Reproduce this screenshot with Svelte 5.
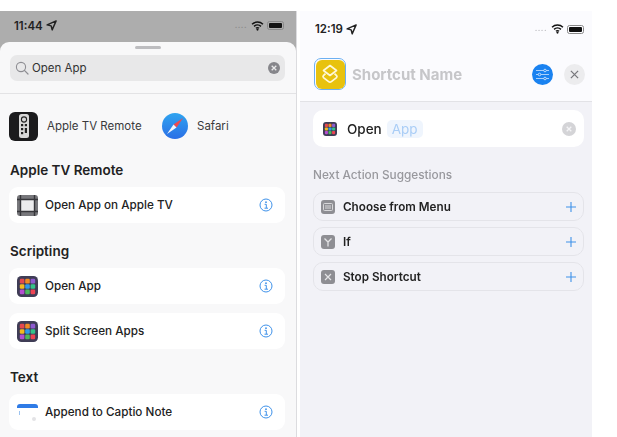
<script>
  const appColors = ['#e5484d', '#f08a24', '#8e5bd0', '#f5b921', '#2f9be8', '#34c48a', '#b44fd0', '#4cb85c', '#ee4453'];

  const sections = [
    { title: 'Apple TV Remote', actions: [{ name: 'Open App on Apple TV', icon: 'film' }] },
    {
      title: 'Scripting',
      actions: [
        { name: 'Open App', icon: 'apps' },
        { name: 'Split Screen Apps', icon: 'apps' }
      ]
    },
    { title: 'Text', actions: [{ name: 'Append to Captio Note', icon: 'note' }] }
  ];

  const suggestions = [
    { name: 'Choose from Menu', icon: 'menu' },
    { name: 'If', icon: 'if' },
    { name: 'Stop Shortcut', icon: 'stop' }
  ];
</script>

{#snippet statusIcons()}
  <div class="status-icons">
    <span class="dots">....</span>
    <svg width="13" height="10" viewBox="0 0 14 11">
      <path d="M1 3.6a8.6 8.6 0 0 1 12 0M3.2 5.9a5.4 5.4 0 0 1 7.6 0M5.3 8a2.4 2.4 0 0 1 3.4 0" fill="none" stroke="#111" stroke-width="1.6" />
      <circle cx="7" cy="9.4" r="1.2" fill="#111" />
    </svg>
    <span class="battery"><span class="level"></span></span>
  </div>
{/snippet}

{#snippet appGrid(size)}
  <svg class="grid-icon" width={size} height={size} viewBox="0 0 21 21">
    <rect width="21" height="21" rx="4.5" fill="#3f3d56" />
    {#each appColors as color, i}
      <rect x={2.8 + (i % 3) * 5.4} y={2.8 + Math.floor(i / 3) * 5.4} width="4.6" height="4.6" rx="1.2" fill={color} />
    {/each}
  </svg>
{/snippet}

{#snippet arrow(color)}
  <svg width="11" height="11" viewBox="0 0 10 10">
    <path d="M9.2 0.8 5.6 9 4.7 5.3 1 4.4Z" fill="none" stroke={color} stroke-width="1.3" stroke-linejoin="round" />
  </svg>
{/snippet}

<div class="screen">
  <section class="phone left">
    <header class="status dim">
      <div class="time">11:44 {@render arrow('#222')}</div>
      {@render statusIcons()}
    </header>

    <div class="sheet">
      <div class="grabber"></div>
      <div class="search-wrap">
        <div class="search">
          <svg width="14" height="14" viewBox="0 0 14 14">
            <circle cx="6" cy="6" r="4.6" fill="none" stroke="#8e8e93" stroke-width="1.1" />
            <path d="M9.4 9.4 13 13" stroke="#8e8e93" stroke-width="1.2" stroke-linecap="round" />
          </svg>
          <span class="query">Open App</span>
          <span class="clear">
            <svg width="6" height="6" viewBox="0 0 6 6"><path d="M.7.7l4.6 4.6M5.3.7.7 5.3" stroke="#e9e9ea" stroke-width="1.3" /></svg>
          </span>
        </div>
      </div>

      <div class="apps">
        <div class="app">
          <span class="remote">
            <svg width="10" height="24" viewBox="0 0 10 24">
              <rect width="10" height="24" rx="2.5" fill="#d8d8d8" />
              <circle cx="5" cy="5.5" r="2.6" fill="none" stroke="#222" stroke-width="1.1" />
              <rect x="2" y="10" width="2.2" height="2.2" fill="#222" />
              <rect x="5.8" y="10" width="2.2" height="2.2" fill="#222" />
              <rect x="2" y="14" width="2.2" height="2.2" fill="#222" />
              <rect x="5.8" y="14" width="2.2" height="5" fill="#222" />
              <rect x="2" y="18" width="2.2" height="2.2" fill="#222" />
            </svg>
          </span>
          <span>Apple TV Remote</span>
        </div>
        <div class="app">
          <svg width="26" height="26" viewBox="0 0 26 26">
            <defs>
              <linearGradient id="sky" x1="0" y1="0" x2="0" y2="1">
                <stop offset="0" stop-color="#2fa4f0" />
                <stop offset="1" stop-color="#2b6fe6" />
              </linearGradient>
            </defs>
            <circle cx="13" cy="13" r="13" fill="url(#sky)" />
            <path d="M21 5 11.5 11.5 14.5 14.5Z" fill="#ee4a4f" />
            <path d="M5 21 11.5 11.5 14.5 14.5Z" fill="#f4f6fb" />
          </svg>
          <span>Safari</span>
        </div>
      </div>

      {#each sections as section}
        <h2>{section.title}</h2>
        <div class="cards">
          {#each section.actions as action}
            <div class="card">
              {#if action.icon === 'film'}
                <svg width="21" height="21" viewBox="0 0 21 21">
                  <rect width="21" height="21" rx="3" fill="#77777b" />
                  <rect x="4" y="5" width="13" height="11" fill="#ededee" />
                  <path d="M3.5 0v21M17.5 0v21M0 4.5h21M0 16.5h21" stroke="#37373b" stroke-width="1.4" />
                </svg>
              {:else if action.icon === 'apps'}
                {@render appGrid(21)}
              {:else}
                <svg width="21" height="21" viewBox="0 0 21 21">
                  <path d="M0 5a3 3 0 0 1 3-3h15a3 3 0 0 1 3 3v1H0Z" fill="#2f7be6" />
                  <rect x="2" y="9" width="1" height="4" fill="#9cc3f0" />
                  <circle cx="17" cy="17" r="2" fill="#e3e3e6" />
                </svg>
              {/if}
              <span class="name">{action.name}</span>
              <svg class="info" width="14" height="14" viewBox="0 0 14 14">
                <circle cx="7" cy="7" r="6" fill="none" stroke="#3f92ea" stroke-width="1" />
                <circle cx="7" cy="4.2" r=".9" fill="#3f92ea" />
                <path d="M5.6 6.3H7.3V10M5.5 10.2H9" fill="none" stroke="#3f92ea" stroke-width="1" />
              </svg>
            </div>
          {/each}
        </div>
      {/each}
    </div>
  </section>

  <section class="phone right">
    <div class="top">
      <header class="status">
        <div class="time">12:19 {@render arrow('#222')}</div>
        {@render statusIcons()}
      </header>
      <div class="title-row">
        <span class="shortcut-ring">
          <span class="shortcut-icon">
            <svg width="20" height="22" viewBox="0 0 20 22">
              <path d="M10 2.5 16.5 7.5 10 12.5 3.5 7.5Z" fill="none" stroke="#fff8d8" stroke-width="1.7" stroke-linejoin="round" />
              <path d="M5.5 10.6 3.4 12.6C2.8 13.3 2.9 14 3.5 14.6L8.6 18.6a2.3 2.3 0 0 0 2.8 0l5.1-4c.6-.6.7-1.3.1-2L14.5 10.6" fill="none" stroke="#fff8d8" stroke-width="1.7" />
            </svg>
          </span>
        </span>
        <span class="shortcut-name">Shortcut Name</span>
        <span class="settings">
          <svg width="15" height="13" viewBox="0 0 15 13">
            <path d="M1 2.5h13M1 6.5h13M1 10.5h13" stroke="#a9d0fb" stroke-width="1" />
            <circle cx="10" cy="2.5" r="1.3" fill="#1a82f0" stroke="#d7e9fe" stroke-width=".8" />
            <circle cx="4.5" cy="6.5" r="1.3" fill="#1a82f0" stroke="#d7e9fe" stroke-width=".8" />
            <circle cx="10" cy="10.5" r="1.3" fill="#1a82f0" stroke="#d7e9fe" stroke-width=".8" />
          </svg>
        </span>
        <span class="close">
          <svg width="9" height="9" viewBox="0 0 10 10"><path d="M1 1l8 8M9 1l-8 8" stroke="#77777c" stroke-width="1.4" /></svg>
        </span>
      </div>
    </div>

    <div class="body">
      <div class="action">
        {@render appGrid(14)}
        <span class="verb">Open</span>
        <span class="token">App</span>
        <span class="action-clear">
          <svg width="6" height="6" viewBox="0 0 6 6"><path d="M.7.7l4.6 4.6M5.3.7.7 5.3" stroke="#f4f4f6" stroke-width="1.3" /></svg>
        </span>
      </div>

      <h3>Next Action Suggestions</h3>

      <div class="pills">
        {#each suggestions as item}
          <div class="pill">
            <span class="pill-icon">
              <svg width="10" height="10" viewBox="0 0 10 10">
                {#if item.icon === 'menu'}
                  <rect x=".5" y="1.5" width="9" height="7" rx="1" fill="none" stroke="#d8d8da" />
                  <path d="M2 4h6M2 6h6" stroke="#d8d8da" />
                {:else if item.icon === 'if'}
                  <path d="M1.5 1.5 5 5l3.5-3.5M5 5v4.5" fill="none" stroke="#e4e4e6" stroke-width="1.3" />
                {:else}
                  <path d="M2 2l6 6M8 2l-6 6" stroke="#e4e4e6" stroke-width="1.2" />
                {/if}
              </svg>
            </span>
            <span class="pill-name">{item.name}</span>
            <svg class="plus" width="10" height="10" viewBox="0 0 10 10"><path d="M5 0v10M0 5h10" stroke="#3f92ea" stroke-width="1.1" /></svg>
          </div>
        {/each}
      </div>
    </div>
  </section>
</div>

<style>
  :global(body) {
    background: #fff;
    overflow: hidden;
  }
  .screen {
    display: flex;
    gap: 3px;
    width: 617px;
    height: 437px;
    padding-top: 11px;
    box-sizing: border-box;
    overflow: hidden;
    font-family: Inter, "Liberation Sans", sans-serif;
    color: #1c1c1e;
    filter: blur(0.5px);
  }
  .phone {
    display: flex;
    flex-direction: column;
    overflow: hidden;
  }
  .left {
    width: 297px;
    background: #adadad;
    border-right: 1px solid #dcdcdf;
    box-sizing: border-box;
  }
  .right {
    width: 292px;
    background: #f2f2f7;
  }
  .status {
    display: flex;
    justify-content: space-between;
    align-items: center;
    height: 31px;
    padding: 0 12px 2px 14px;
    box-sizing: border-box;
    flex: none;
  }
  .status.dim .dots {
    color: #8c8c8c;
  }
  .time {
    display: flex;
    align-items: center;
    gap: 3px;
    font-size: 11.5px;
    font-weight: 600;
    color: #222;
  }
  .status-icons {
    display: flex;
    align-items: center;
    gap: 3px;
  }
  .dots {
    font-size: 9px;
    letter-spacing: 0.5px;
    line-height: 9px;
    color: #b8b8bc;
    margin-right: 1px;
    padding-bottom: 3px;
  }
  .battery {
    display: block;
    width: 17px;
    height: 9px;
    padding: 1px;
    box-sizing: border-box;
    border: 1px solid #888;
    border-radius: 2.5px;
  }
  .level {
    display: block;
    height: 100%;
    background: #111;
    border-radius: 1px;
  }

  .sheet {
    flex: 1;
    background: #f8f8f9;
    border-radius: 9px 9px 0 0;
  }
  .grabber {
    width: 26px;
    height: 3px;
    margin: 4px auto 0;
    border-radius: 2px;
    background: #bdbdc0;
  }
  .search-wrap {
    padding: 6px 11px 12px 10px;
    border-bottom: 1px solid #e3e3e5;
  }
  .search {
    display: flex;
    align-items: center;
    height: 26px;
    padding: 0 5px 0 5px;
    background: #e8e8e9;
    border-radius: 7px;
  }
  .query {
    flex: 1;
    margin-left: 3px;
    font-size: 11.5px;
    color: #333;
  }
  .clear {
    display: grid;
    place-items: center;
    width: 12px;
    height: 12px;
    border-radius: 50%;
    background: #86868b;
  }
  .apps {
    display: flex;
    align-items: center;
    height: 30px;
    margin-top: 17px;
    padding-left: 9px;
  }
  .app {
    display: flex;
    align-items: center;
    gap: 9px;
    font-size: 11.5px;
    color: #3a3a3c;
  }
  .app:first-child {
    width: 153px;
  }
  .remote {
    display: grid;
    place-items: center;
    width: 29px;
    height: 29px;
    background: #1b1b1d;
    border-radius: 6px;
  }
  h2 {
    margin: 21px 0 8px 10px;
    font-size: 13.5px;
    line-height: 17px;
    font-weight: 600;
    color: #222;
  }
  .cards {
    display: flex;
    flex-direction: column;
    gap: 9px;
    margin: 0 11px 0 9px;
  }
  .cards + h2 {
    margin-top: 20px;
  }
  .card {
    display: flex;
    align-items: center;
    gap: 7px;
    height: 36px;
    padding: 0 12px 0 8px;
    background: #fff;
    border-radius: 9px;
  }
  .name {
    flex: 1;
    font-size: 11.7px;
    font-weight: 500;
    color: #222;
  }

  .top {
    height: 91px;
    background: #fbfbfe;
    border-bottom: 1px solid #e2e2e6;
    flex: none;
    box-sizing: border-box;
  }
  .top .status {
    height: 36px;
    padding: 0 8px 0 15px;
  }
  .title-row {
    display: flex;
    align-items: center;
    margin-top: 11px;
    padding: 0 7px 0 14px;
  }
  .shortcut-ring {
    display: grid;
    place-items: center;
    width: 32px;
    height: 32px;
    box-sizing: border-box;
    border: 1px solid #6db0f2;
    border-radius: 7px;
  }
  .shortcut-icon {
    display: grid;
    place-items: center;
    width: 29px;
    height: 29px;
    background: #e8c20e;
    border-radius: 6px;
  }
  .shortcut-name {
    flex: 1;
    margin-left: 6px;
    font-size: 15px;
    font-weight: 700;
    color: #c6c6c9;
  }
  .settings,
  .close {
    display: grid;
    place-items: center;
    width: 21px;
    height: 21px;
    border-radius: 50%;
  }
  .settings {
    background: #1a82f0;
    margin-right: 11px;
  }
  .close {
    background: #ececee;
  }

  .body {
    padding: 8px 8px 0 13px;
  }
  .action {
    display: flex;
    align-items: center;
    height: 37px;
    padding: 0 8px 0 10px;
    background: #fff;
    border-radius: 10px;
  }
  .verb {
    margin-left: 10px;
    font-size: 13.5px;
    font-weight: 500;
    color: #222;
  }
  .token {
    flex: none;
    margin-left: 5px;
    padding: 0 5px;
    line-height: 18px;
    font-size: 13.5px;
    color: #a9cdf6;
    background: #eff5fd;
    border-radius: 5px;
  }
  .action-clear {
    display: grid;
    place-items: center;
    width: 14px;
    height: 14px;
    margin-left: auto;
    border-radius: 50%;
    background: #d4d4d7;
  }
  h3 {
    margin: 21px 0 9px;
    font-size: 11.8px;
    line-height: 15px;
    font-weight: 500;
    color: #98989d;
  }
  .pills {
    display: flex;
    flex-direction: column;
    gap: 6px;
  }
  .pill {
    display: flex;
    align-items: center;
    gap: 8px;
    height: 29px;
    padding: 0 7px;
    box-sizing: border-box;
    border: 1px solid #e4e4e9;
    border-radius: 10px;
  }
  .pill-icon {
    display: grid;
    place-items: center;
    width: 14px;
    height: 14px;
    background: #8e8e93;
    border-radius: 3px;
  }
  .pill-name {
    flex: 1;
    font-size: 11.7px;
    font-weight: 600;
    color: #222;
  }
</style>
